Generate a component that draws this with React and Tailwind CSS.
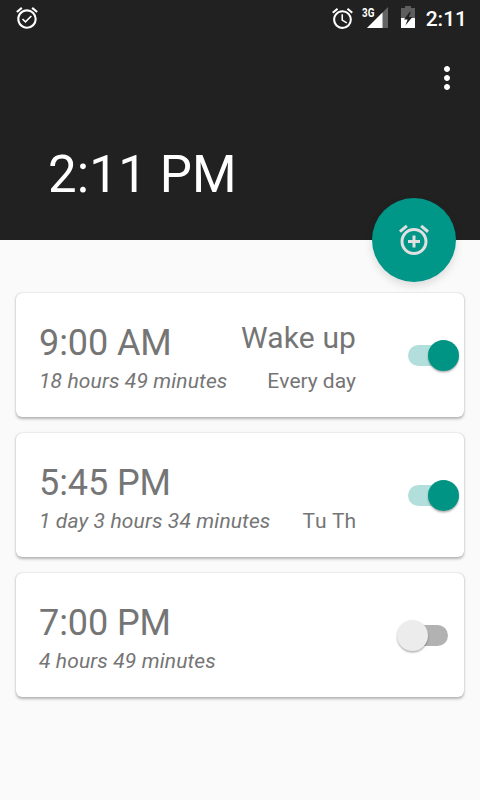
import React, { useState } from 'react';
import { MdAlarm, MdAlarmAdd, MdAlarmOn, MdMoreVert } from 'react-icons/md';

const initialAlarms = [
  { id: 1, time: '9:00 AM', remaining: '18 hours 49 minutes', label: 'Wake up', days: 'Every day', enabled: true },
  { id: 2, time: '5:45 PM', remaining: '1 day 3 hours 34 minutes', label: '', days: 'Tu Th', enabled: true },
  { id: 3, time: '7:00 PM', remaining: '4 hours 49 minutes', label: '', days: '', enabled: false },
];

const SignalIcon = () => (
  <svg width="21" height="21" viewBox="0 0 21 21">
    <path d="M21 0V21H0Z" fill="#646464" />
    <path d="M15.5 5.5V21H0Z" fill="#fff" />
  </svg>
);

const BatteryIcon = () => (
  <svg width="14" height="22" viewBox="0 0 14 22">
    <path d="M4 0H10V2H14V12H0V2H4Z" fill="#5e5e5e" />
    <path d="M0 12H14V22H0Z" fill="#fff" />
    <path d="M8.8 5.8L3 13.4H6.6L4.4 19.4L11.4 11H7.8L9.8 5.8Z" fill="#212121" />
  </svg>
);

const StatusBar = () => (
  <div className="flex h-9 items-center pl-[14px] pr-[13px] text-white">
    <MdAlarmOn size={26} />
    <div className="ml-auto flex items-center">
      <MdAlarm size={25} />
      <div className="relative ml-[12px] -mt-[2px] w-[21px]">
        <SignalIcon />
        <span className="absolute -left-[5px] top-0 origin-left scale-x-[0.82] text-[12px] font-bold leading-[12px]">3G</span>
      </div>
      <div className="-mt-[2px] ml-[13px]">
        <BatteryIcon />
      </div>
      <span className="ml-[11px] pt-px text-[21px] font-medium leading-9">2:11</span>
    </div>
  </div>
);

const Toggle = ({ checked, onChange }) => (
  <button
    type="button"
    role="switch"
    aria-checked={checked}
    onClick={onChange}
    className="relative h-[21px] w-10 shrink-0"
  >
    <span className={`block h-[21px] w-10 rounded-full ${checked ? 'bg-[#b2dfdb]' : 'bg-[#b2b2b2]'}`} />
    <span
      className={`absolute -top-[5px] h-[31px] w-[31px] rounded-full shadow-[0_1.5px_2px_rgba(0,0,0,0.3)] ${
        checked ? 'left-[20px] bg-[#009485]' : '-left-[11px] bg-[#ececec]'
      }`}
    />
  </button>
);

const AlarmCard = ({ alarm, onToggle }) => (
  <div className="flex h-[124px] items-center rounded-[6px] bg-white pl-[23px] pr-4 text-[#757575] shadow-[0_1.5px_3px_rgba(0,0,0,0.28),0_0_1px_rgba(0,0,0,0.22)]">
    <div className="flex w-[317px] flex-col pt-[10px]">
      <div className="flex h-[42px] justify-between">
        <span className="text-[36px] leading-[42px] tracking-[-0.08px]">{alarm.time}</span>
        <span className="text-[30px] leading-[32px] tracking-[0.12px]">{alarm.label}</span>
      </div>
      <div className="flex h-[34px] justify-between text-[21px] leading-[34px]">
        <span className="italic tracking-[0.13px]">{alarm.remaining}</span>
        <span className="[font-kerning:none]">{alarm.days}</span>
      </div>
    </div>
    <div className="ml-auto flex">
      <Toggle checked={alarm.enabled} onChange={onToggle} />
    </div>
  </div>
);

const App = () => {
  const [alarms, setAlarms] = useState(initialAlarms);

  const toggleAlarm = (id) => {
    setAlarms(alarms.map((a) => (a.id === id ? { ...a, enabled: !a.enabled } : a)));
  };

  return (
    <div className="h-[800px] w-[480px] overflow-hidden bg-[#fafafa] font-[Roboto,sans-serif]">
      <header className="relative h-[240px] bg-[#212121] text-white">
        <StatusBar />
        <div className="flex h-[84px] items-center justify-end pr-[15px]">
          <button type="button" aria-label="More options">
            <MdMoreVert size={36} />
          </button>
        </div>
        <h1 className="pl-12 pt-[25px] text-[51px] leading-[60px] tracking-[0.15px]">2:11 PM</h1>

        {/* Floating button straddles the bottom edge of the header */}
        <button
          type="button"
          aria-label="Add alarm"
          className="absolute -bottom-[42px] right-6 flex h-[84px] w-[84px] items-center justify-center rounded-full bg-[#009688] text-[#e0e0e0] shadow-[0_4px_8px_rgba(0,0,0,0.12)]"
        >
          <MdAlarmAdd size={36} />
        </button>
      </header>

      <main className="flex flex-col gap-4 px-4 pt-[53px]">
        {alarms.map((alarm) => (
          <AlarmCard key={alarm.id} alarm={alarm} onToggle={() => toggleAlarm(alarm.id)} />
        ))}
      </main>
    </div>
  );
};

export default App;
